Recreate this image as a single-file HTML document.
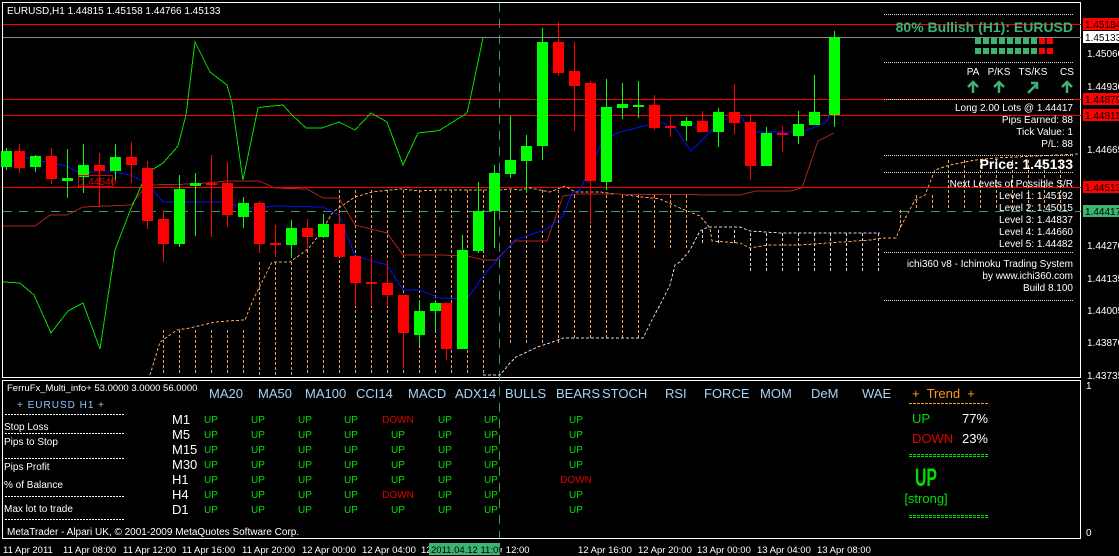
<!DOCTYPE html>
<html><head><meta charset="utf-8">
<style>
html,body{margin:0;padding:0;background:#000;width:1119px;height:556px;overflow:hidden}
svg{display:block;font-family:"Liberation Sans",sans-serif}
</style></head><body>
<svg id="s" width="1119" height="556" viewBox="0 0 1119 556" xmlns="http://www.w3.org/2000/svg" shape-rendering="crispEdges">
<rect width="1119" height="556" fill="#000"/>
<rect x="2.5" y="2.5" width="1078" height="375" fill="none" stroke="#fff"/>
<rect x="2.5" y="380.5" width="1078" height="158" fill="none" stroke="#fff"/>
<line x1="3" y1="24.5" x2="1081" y2="24.5" stroke="#f00"/>
<line x1="3" y1="37.5" x2="1081" y2="37.5" stroke="#8a8a8a"/>
<line x1="3" y1="99.5" x2="1081" y2="99.5" stroke="#f00"/>
<line x1="3" y1="115.5" x2="1081" y2="115.5" stroke="#f00"/>
<line x1="3" y1="187.5" x2="1081" y2="187.5" stroke="#f00"/>
<line x1="3" y1="211.5" x2="1081" y2="211.5" stroke="#3c9a6c" stroke-dasharray="9,7"/>
<line x1="499.5" y1="3" x2="499.5" y2="538" stroke="#3c9a6c" stroke-dasharray="9,7"/>
<g id="cloud" fill="none"></g>
<polyline fill="none" stroke="#f5a45a" stroke-dasharray="3,2" points="150,375 160,342 177,330 190,328 215,322 227,321 245,320 253,300 272,262 290,262 308,249 320,234 333,212 355,197 372,192 389,190 403,189 419,191 440,190 469,190 482,190 500,190 510,189 520,190 530,188 550,192 565,186 575,192 600,192 660,199 680,208 700,216 710,228 712,241 740,243 750,248 768,245 800,245 870,240 884,238 896,238 900,228 915,200 925,195 935,170 950,165 975,160 995,158 1078,154"/>
<polyline fill="none" stroke="#e8d0e0" stroke-dasharray="3,2" points="483,375 500,375 510,363 516,357 540,346 550,343 563,338 587,338 643,338 655,314 660,305 670,285 675,265 680,262 690,250 700,231 708,227 740,227 750,231 780,233 820,233 880,233"/>
<polyline fill="none" stroke="#b02020" points="3,226 35,226 50,215 67,215 83,207 131,205 147,185 195,184 227,181 259,181 275,188 307,189 323,198 339,198 355,225 371,229 387,233 403,255 440,255 467,256 484,260 496,260 515,241 547,241 563,196 578,194 740,195 756,191 790,191 802,188 818,141 834,133"/>
<polyline fill="none" stroke="#00e000" points="3,282 20,283 34,295 51,333 68,311 83,303 100,349 115,250 130,211 147,173 163,163 178,146 186,115 195,42 210,72 227,85 232,103 243,180 258,108 262,107 283,105 292,115 306,128 322,128 339,122 355,130 371,113 387,122 403,165 418,133 436,131 440,130 467,113 470,100 483,38"/>
<polyline fill="none" stroke="#0010ff" points="3,168 20,156 35,160 67,166 83,175 99,170 131,175 147,183 163,202 227,202 243,208 259,208 275,206 323,207 339,215 355,256 387,265 403,290 419,290 440,298 467,299 484,275 515,240 547,229 563,216 572,193 580,190 603,140 611,136 620,132 660,122 675,128 691,151 720,122 738,113 752,132 802,132 818,126 826,122 835,106"/>
<g id="candles"></g>
<rect x="78.5" y="175.5" width="34" height="11" fill="none" stroke="#d00"/>
<text x="80" y="185" font-size="10" fill="#d00">1.44540</text>
<text x="7" y="14" font-size="10" fill="#fff">EURUSD,H1  1.44815 1.45158 1.44766 1.45133</text>
<g stroke="#ddd" stroke-dasharray="1,1">
<line x1="884" y1="14.5" x2="1073" y2="14.5"/><line x1="884" y1="62.5" x2="1073" y2="62.5"/>
<line x1="884" y1="99.5" x2="1073" y2="99.5"/><line x1="884" y1="155.5" x2="1073" y2="155.5"/>
<line x1="884" y1="172.5" x2="1073" y2="172.5"/><line x1="884" y1="252.5" x2="1073" y2="252.5"/>
<line x1="884" y1="300.5" x2="1073" y2="300.5"/>
</g>
<text x="1073" y="32" text-anchor="end" font-size="14" font-weight="bold" fill="#3cb371">80% Bullish (H1): EURUSD</text>
<g id="sq"></g>
<g font-size="10" fill="#fff" text-anchor="middle">
<text x="973" y="75">PA</text><text x="999" y="75">P/KS</text><text x="1033" y="75">TS/KS</text><text x="1067" y="75">CS</text>
</g>
<g fill="none" stroke="#3cb371" stroke-width="2.5" shape-rendering="auto">
<path d="M973,93 V82 M968,87 L973,82 L978,87"/><path d="M999,93 V82 M994,87 L999,82 L1004,87"/>
<path d="M1028,93 L1037,84 M1031,83 H1037 V89"/><path d="M1067,93 V82 M1062,87 L1067,82 L1072,87"/>
</g>
<g font-size="10" fill="#fff" text-anchor="end">
<text x="1073" y="111">Long 2.00 Lots @ 1.44417</text>
<text x="1073" y="123">Pips Earned: 88</text>
<text x="1073" y="135">Tick Value: 1</text>
<text x="1073" y="147">P/L: 88</text>
<text x="1073" y="169" font-size="14" font-weight="bold">Price: 1.45133</text>
<text x="1073" y="187">Next Levels of Possible S/R</text>
<text x="1073" y="199">Level 1: 1.45192</text>
<text x="1073" y="211">Level 2: 1.45015</text>
<text x="1073" y="223">Level 3: 1.44837</text>
<text x="1073" y="235">Level 4: 1.44660</text>
<text x="1073" y="247">Level 5: 1.44482</text>
<text x="1073" y="267">ichi360 v8 - Ichimoku Trading System</text>
<text x="1073" y="279">by www.ichi360.com</text>
<text x="1073" y="291">Build 8.100</text>
</g>
<g font-size="10" fill="#fff">
<text x="1087" y="57">1.45060</text><text x="1087" y="90">1.44930</text>
<text x="1087" y="153">1.44665</text><text x="1087" y="249">1.44270</text>
<text x="1087" y="282">1.44135</text><text x="1087" y="314">1.44005</text>
<text x="1087" y="346">1.43870</text><text x="1087" y="379">1.43735</text>
<text x="1086" y="389">1</text><text x="1086" y="536">0</text>
</g>
<rect x="1083" y="18" width="36" height="12" fill="#f00"/><text x="1085" y="28" font-size="10" fill="#000">1.45184</text>
<rect x="1083" y="31" width="36" height="12" fill="#fff"/><text x="1085" y="41" font-size="10" fill="#000">1.45133</text>
<rect x="1083" y="93" width="36" height="12" fill="#f00"/><text x="1085" y="103" font-size="10" fill="#000">1.44879</text>
<rect x="1083" y="109" width="36" height="12" fill="#f00"/><text x="1085" y="119" font-size="10" fill="#000">1.44811</text>
<rect x="1083" y="181" width="36" height="12" fill="#f00"/><text x="1085" y="191" font-size="10" fill="#000">1.44513</text>
<rect x="1083" y="205" width="36" height="12" fill="#3cb371"/><text x="1085" y="215" font-size="10" fill="#000">1.44417</text>
<text x="7" y="391" font-size="9.5" fill="#fff">FerruFx_Multi_info+ 53.0000 3.0000 56.0000</text>
<text x="17" y="408" font-size="10" fill="#8cc8ff" letter-spacing="1">+ EURUSD  H1 +</text>
<g stroke="#fff" stroke-dasharray="2,1"><line x1="5" y1="414.5" x2="125" y2="414.5"/><line x1="5" y1="433.5" x2="125" y2="433.5"/><line x1="5" y1="458.5" x2="125" y2="458.5"/><line x1="5" y1="496.5" x2="125" y2="496.5"/><line x1="5" y1="519.5" x2="125" y2="519.5"/></g>
<g font-size="10" fill="#fff"><text x="4" y="430">Stop Loss</text><text x="4" y="445">Pips to Stop</text><text x="4" y="470">Pips Profit</text><text x="4" y="488">% of Balance</text><text x="4" y="512">Max lot to trade</text>
<text x="7" y="535">MetaTrader - Alpari UK, © 2001-2009 MetaQuotes Software Corp.</text></g>
<g font-size="13" fill="#a8d4f8">
<text x="209" y="398">MA20</text><text x="258" y="398">MA50</text><text x="305" y="398">MA100</text><text x="356" y="398">CCI14</text><text x="408" y="398">MACD</text><text x="455" y="398">ADX14</text><text x="505" y="398">BULLS</text><text x="556" y="398">BEARS</text><text x="602" y="398">STOCH</text><text x="665" y="398">RSI</text><text x="704" y="398">FORCE</text><text x="760" y="398">MOM</text><text x="811" y="398">DeM</text><text x="862" y="398">WAE</text>
</g>
<g font-size="13" fill="#fff"><text x="172" y="424">M1</text><text x="172" y="439">M5</text><text x="172" y="454">M15</text><text x="172" y="469">M30</text><text x="172" y="484">H1</text><text x="172" y="499">H4</text><text x="172" y="514">D1</text></g>
<g id="ups" font-size="10" text-anchor="middle" fill="#00e000"></g>
<text x="912" y="398" font-size="13" fill="#ff9a1a" xml:space="preserve">+  Trend  +</text>
<line x1="909" y1="403.5" x2="989" y2="403.5" stroke="#ff9a1a" stroke-dasharray="3,1"/>
<text x="912" y="423" font-size="13" fill="#00e000">UP</text><text x="988" y="423" font-size="13" fill="#fff" text-anchor="end">77%</text>
<text x="912" y="443" font-size="13" fill="#e00000">DOWN</text><text x="988" y="443" font-size="13" fill="#fff" text-anchor="end">23%</text>
<line x1="909" y1="454.5" x2="989" y2="454.5" stroke="#00e000" stroke-dasharray="3,1"/><line x1="909" y1="456.5" x2="989" y2="456.5" stroke="#00e000" stroke-dasharray="3,1"/>
<text x="0" y="0" font-size="22" font-weight="bold" fill="#00e000" text-anchor="middle" transform="translate(926,486) scale(0.72,1.15)">UP</text>
<text x="926" y="503" font-size="13" fill="#00e000" text-anchor="middle">[strong]</text>
<line x1="909" y1="515.5" x2="989" y2="515.5" stroke="#00e000" stroke-dasharray="3,1"/><line x1="909" y1="517.5" x2="989" y2="517.5" stroke="#00e000" stroke-dasharray="3,1"/>
<g font-size="9.5" fill="#fff">
<text x="3" y="553">11 Apr 2011</text><text x="63" y="553">11 Apr 08:00</text><text x="123" y="553">11 Apr 12:00</text><text x="182" y="553">11 Apr 16:00</text><text x="242" y="553">11 Apr 20:00</text><text x="302" y="553">12 Apr 00:00</text><text x="362" y="553">12 Apr 04:00</text><text x="421" y="553">12</text><text x="500" y="553">r 12:00</text><text x="578" y="553">12 Apr 16:00</text><text x="638" y="553">12 Apr 20:00</text><text x="697" y="553">13 Apr 00:00</text><text x="757" y="553">13 Apr 04:00</text><text x="817" y="553">13 Apr 08:00</text>
</g>
<rect x="429" y="543" width="71" height="12" fill="#3cb371"/><text x="431" y="553" font-size="9.5" fill="#000">2011.04.12 11:00</text>
</svg>
<script>
var NS="http://www.w3.org/2000/svg";
function el(p,t,a){var e=document.createElementNS(NS,t);for(var k in a)e.setAttribute(k,a[k]);p.appendChild(e);return e;}
var C=[[6,'g',151,167,148,170],[19,'r',151,168,144,173],[35,'g',156,167,155,172],[51,'r',156,179,148,184],[67,'g',178,181,149,198],[83,'g',165,177,144,193],[99,'r',165,171,153,207],[115,'g',157,171,144,181],[131,'r',157,165,142,183],[147,'r',168,221,161,229],[163,'r',219,244,210,262],[179,'g',189,244,175,247],[195,'g',183,186,173,236],[211,'r',183,185,155,237],[227,'r',183,215,162,227],[243,'g',203,217,197,228],[259,'r',203,244,201,253],[275,'r',243,245,225,257],[291,'g',228,245,220,258],[307,'r',228,237,219,248],[323,'g',224,237,214,238],[339,'r',224,257,214,257],[355,'r',256,283,256,306],[371,'r',282,284,256,306],[387,'r',283,295,260,306],[403,'r',295,333,295,368],[419,'g',311,335,300,345],[435,'g',303,311,300,330],[446,'r',303,349,303,360],[462,'g',250,349,235,349],[478,'g',211,251,182,253],[494,'g',173,211,165,248],[510,'g',160,174,116,178],[526,'g',146,161,135,193],[542,'g',42,146,28,160],[558,'r',42,73,22,76],[574,'r',71,86,42,131],[590,'r',83,181,81,222],[606,'g',107,182,79,190],[622,'g',104,108,83,119],[638,'g',105,106,81,118],[654,'r',105,128,95,130],[670,'r',126,128,116,137],[686,'g',121,126,117,141],[702,'r',121,132,111,132],[718,'g',112,132,108,147],[734,'r',112,123,84,134],[750,'r',122,166,114,180],[766,'g',133,166,127,166],[782,'r',133,134,126,152],[798,'g',124,136,111,144],[814,'g',112,125,75,125],[834,'g',37,115,31,127]];
var cg=document.getElementById('candles');
C.forEach(function(c){var col=c[1]=='g'?'#00ff00':'#ff0000';
el(cg,'rect',{x:c[0],y:c[4],width:1,height:c[5]-c[4],fill:col});
el(cg,'rect',{x:c[0]-5,y:c[2],width:11,height:Math.max(2,c[3]-c[2]),fill:col});});
var cl=document.getElementById('cloud');
var vx=[163,179,195,211,227,243,259,275,291,307,323,339,355,371,387,403,419,435,451,467,483,510,526,542,558,574,590,606,622,638,654,670,686,702,718,734,750,766,782,798,814,830,846,862,878];
function topAt(x){return x<253?330:x<300?262:x<330?235:x<560?190:x<700?195:x<740?230:233;}
function botAt(x){return x<500?375:x<560?345:x<650?338:x<700?250:x<740?243:x<880?272:240;}
vx.forEach(function(x){var t=topAt(x),b=botAt(x);if(b>t)el(cl,'line',{x1:x+.5,y1:t,x2:x+.5,y2:b,stroke:x>700?'#e8d0e0':'#f5a45a','stroke-dasharray':'3,2'});});
[900,916,932,948,964,980,996,1012,1028,1044,1060].forEach(function(x){var t=x<916?228:x<936?195:160;el(cl,'line',{x1:x+.5,y1:t,x2:x+.5,y2:210,stroke:'#f5a45a','stroke-dasharray':'3,2'});});
var sq=document.getElementById('sq');
for(var r=0;r<2;r++)for(var i=0;i<10;i++)el(sq,'rect',{x:975+i*8,y:38+r*10,width:6,height:6,fill:i<8?'#3cb371':'#ff0000'});
var ups=document.getElementById('ups');
var cols=[211,258,305,351,398,445,491,576],rows=[423,438,453,468,483,498,513];
rows.forEach(function(y,ri){cols.forEach(function(x,ci){var d=(ci==4&&(ri==0||ri==5))||(ci==7&&ri==4);
var t=el(ups,'text',{x:x,y:y,fill:d?'#e00000':'#00e000'});t.textContent=d?'DOWN':'UP';});});
</script>
</body></html>
